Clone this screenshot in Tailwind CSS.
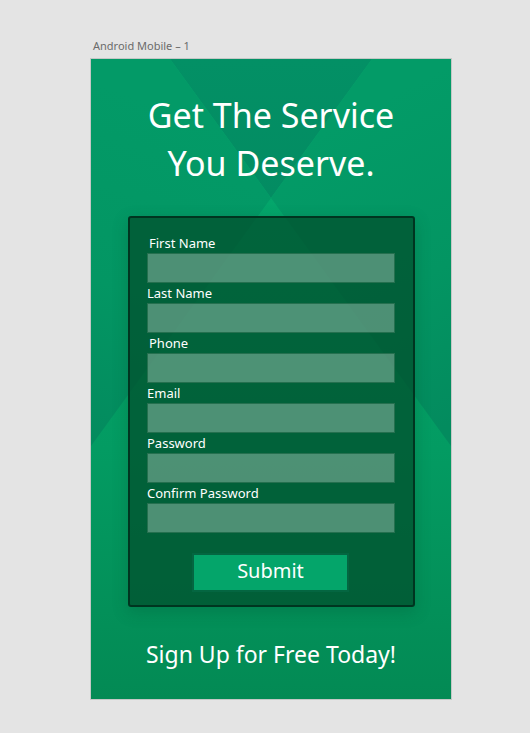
<!DOCTYPE html>
<html lang="en">
<head>
<meta charset="utf-8">
<meta name="viewport" content="width=device-width, initial-scale=1">
<title>Android Mobile – 1</title>
<script src="https://cdn.jsdelivr.net/npm/@tailwindcss/browser@4"></script>
</head>
<body class="min-h-screen bg-[#e4e4e4] pt-9 pr-[78px] pb-8 pl-[90px] font-['Segoe_UI','Noto_Sans',sans-serif]">
  <p class="mb-0.5 pl-[3px] text-[11px] leading-5 text-[#6b6b6b]">Android Mobile – 1</p>
  <main class="relative isolate overflow-hidden border border-[#c4c8c6] text-white">
    <!-- Crossed background facets -->
    <svg class="absolute inset-0 -z-10 size-full" viewBox="0 0 360 640" preserveAspectRatio="none" aria-hidden="true">
      <defs>
        <linearGradient id="top" gradientUnits="userSpaceOnUse" x1="180" y1="0" x2="180" y2="139"><stop stop-color="#039065"/><stop offset="1" stop-color="#038c62"/></linearGradient>
        <linearGradient id="left" gradientUnits="userSpaceOnUse" x1="110" y1="60" x2="0" y2="380"><stop stop-color="#039a67"/><stop offset=".55" stop-color="#039663"/><stop offset="1" stop-color="#038b5e"/></linearGradient>
        <linearGradient id="right" gradientUnits="userSpaceOnUse" x1="220" y1="80" x2="370" y2="360"><stop stop-color="#039b67"/><stop offset=".55" stop-color="#039562"/><stop offset="1" stop-color="#038b5e"/></linearGradient>
        <linearGradient id="bottom" gradientUnits="userSpaceOnUse" x1="180" y1="139" x2="180" y2="640"><stop stop-color="#04a66b"/><stop offset=".5" stop-color="#039b62"/><stop offset="1" stop-color="#038a54"/></linearGradient>
      </defs>
      <path fill="url(#bottom)" d="M0 0h360v640H0z"/>
      <path fill="url(#top)" d="M79 0h202L180 139z"/>
      <path fill="url(#left)" d="M0 0h79l101 139L0 387z"/>
      <path fill="url(#right)" d="M360 0h-79L180 139l180 248z"/>
    </svg>

    <h1 class="pt-8 text-center text-[34px] leading-12">Get The Service<br>You Deserve.</h1>

    <form class="mr-9 ml-[37px] mt-[29px] flex flex-col rounded-[3px] border-2 border-[#003520] bg-[#004e2c]/75 pt-[15px] pr-[18px] pb-[13px] pl-[17px] text-[13px] leading-5 shadow-[0_5px_16px_1px_rgba(0,60,36,0.2)]">
      <label for="first" class="pl-0.5">First Name</label>
      <input id="first" type="text" class="h-[30px] w-full border border-[#25704f] bg-white/30 px-2">
      <label for="last">Last Name</label>
      <input id="last" type="text" class="h-[30px] w-full border border-[#25704f] bg-white/30 px-2">
      <label for="phone" class="pl-0.5">Phone</label>
      <input id="phone" type="tel" class="h-[30px] w-full border border-[#25704f] bg-white/30 px-2">
      <label for="email">Email</label>
      <input id="email" type="email" class="h-[30px] w-full border border-[#25704f] bg-white/30 px-2">
      <label for="password">Password</label>
      <input id="password" type="password" class="h-[30px] w-full border border-[#25704f] bg-white/30 px-2">
      <label for="confirm">Confirm Password</label>
      <input id="confirm" type="password" class="h-[30px] w-full border border-[#25704f] bg-white/30 px-2">
      <button type="submit" class="mr-[46px] ml-[45px] mt-5 border-2 border-[#046641] bg-[#04a56a] pb-1 pt-px text-xl leading-[30px]">Submit</button>
    </form>

    <p class="pt-[31px] pb-[29px] text-center text-[23px] leading-8">Sign Up for Free Today!</p>
  </main>
</body>
</html>
